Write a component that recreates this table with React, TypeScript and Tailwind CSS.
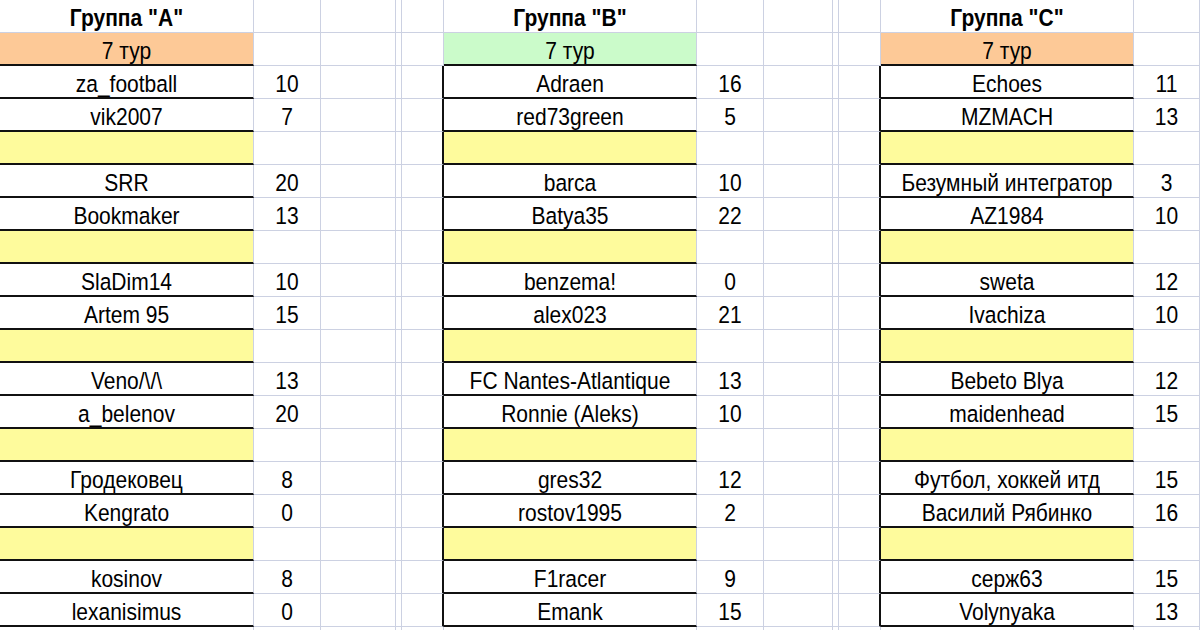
import React from "react";

type Entry = [string, number] | null;

const groups: { title: string; tour: string; entries: Entry[] }[] = [
  {
    title: 'Группа "A"',
    tour: "bg-[#fdc997]",
    entries: [
      ["za_football", 10],
      ["vik2007", 7],
      null,
      ["SRR", 20],
      ["Bookmaker", 13],
      null,
      ["SlaDim14", 10],
      ["Artem 95", 15],
      null,
      ["Veno/\\/\\", 13],
      ["a_belenov", 20],
      null,
      ["Гродековец", 8],
      ["Kengrato", 0],
      null,
      ["kosinov", 8],
      ["lexanisimus", 0],
    ],
  },
  {
    title: 'Группа "B"',
    tour: "bg-[#cbfbca]",
    entries: [
      ["Adraen", 16],
      ["red73green", 5],
      null,
      ["barca", 10],
      ["Batya35", 22],
      null,
      ["benzema!", 0],
      ["alex023", 21],
      null,
      ["FC Nantes-Atlantique", 13],
      ["Ronnie (Aleks)", 10],
      null,
      ["gres32", 12],
      ["rostov1995", 2],
      null,
      ["F1racer", 9],
      ["Emank", 15],
    ],
  },
  {
    title: 'Группа "C"',
    tour: "bg-[#fdc997]",
    entries: [
      ["Echoes", 11],
      ["MZMACH", 13],
      null,
      ["Безумный интегратор", 3],
      ["AZ1984", 10],
      null,
      ["sweta", 12],
      ["Ivachiza", 10],
      null,
      ["Bebeto Blya", 12],
      ["maidenhead", 15],
      null,
      ["Футбол, хоккей итд", 15],
      ["Василий Рябинко", 16],
      null,
      ["серж63", 15],
      ["Volynyaka", 13],
    ],
  },
];

const grid = "border-r border-b border-[#ccd1e2]";

const Txt = ({ children, bold }: { children?: React.ReactNode; bold?: boolean }) => (
  <span className={`block leading-none scale-y-[1.15] whitespace-pre ${bold ? "font-bold" : ""}`}>
    {children}
  </span>
);

// plain empty gridline cell
const Blank = ({ extra = "" }: { extra?: string }) => <div className={`${grid} ${extra}`} />;

const NameCell = ({ children, extra = "" }: { children?: React.ReactNode; extra?: string }) => (
  <div className={`${grid} flex justify-center items-start pt-[7px] ${extra}`}>{children}</div>
);

export default function App() {
  const rows: React.ReactNode[] = [];

  // header row
  groups.forEach((g, gi) => {
    if (gi > 0) {
      rows.push(<Blank key={`h-s1-${gi}`} />, <Blank key={`h-s2-${gi}`} />);
    }
    rows.push(
      <NameCell key={`h-n-${gi}`}>
        <Txt bold>{g.title}</Txt>
      </NameCell>,
      <Blank key={`h-sc-${gi}`} />
    );
    if (gi < 2) rows.push(<Blank key={`h-e-${gi}`} />);
  });

  // tour row
  groups.forEach((g, gi) => {
    if (gi > 0) {
      rows.push(<Blank key={`t-s1-${gi}`} />, <Blank key={`t-s2-${gi}`} />);
    }
    rows.push(
      <NameCell key={`t-n-${gi}`} extra={`${g.tour} border-b-2 border-b-[#111]`}>
        <Txt>7 тур</Txt>
      </NameCell>,
      <Blank key={`t-sc-${gi}`} />
    );
    if (gi < 2) rows.push(<Blank key={`t-e-${gi}`} />);
  });

  // data rows
  for (let r = 0; r < 17; r++) {
    groups.forEach((g, gi) => {
      const e = g.entries[r];
      if (gi > 0) {
        rows.push(
          <Blank key={`d${r}-s1-${gi}`} />,
          <Blank key={`d${r}-s2-${gi}`} extra="border-r-2 border-r-[#111]" />
        );
      }
      rows.push(
        <NameCell
          key={`d${r}-n-${gi}`}
          extra={`border-b-2 border-b-[#111] ${e ? "bg-white" : "bg-[#fefb9c]"}`}
        >
          {e && <Txt>{e[0]}</Txt>}
        </NameCell>,
        <NameCell key={`d${r}-sc-${gi}`}>{e && <Txt>{e[1]}</Txt>}</NameCell>
      );
      if (gi < 2) rows.push(<Blank key={`d${r}-e-${gi}`} />);
    });
  }

  // trailing row, cut by the window
  for (let c = 0; c < 12; c++) rows.push(<Blank key={`z-${c}`} />);

  return (
    <div className="w-[1200px] h-[630px] overflow-hidden bg-white text-[21px] text-black font-['Liberation_Sans',Arial,sans-serif]">
      <div className="grid grid-cols-[254px_67px_75px_6px_42px_253px_67px_69px_6px_42px_253px_66px] auto-rows-[33px]">
        {rows}
      </div>
    </div>
  );
}
